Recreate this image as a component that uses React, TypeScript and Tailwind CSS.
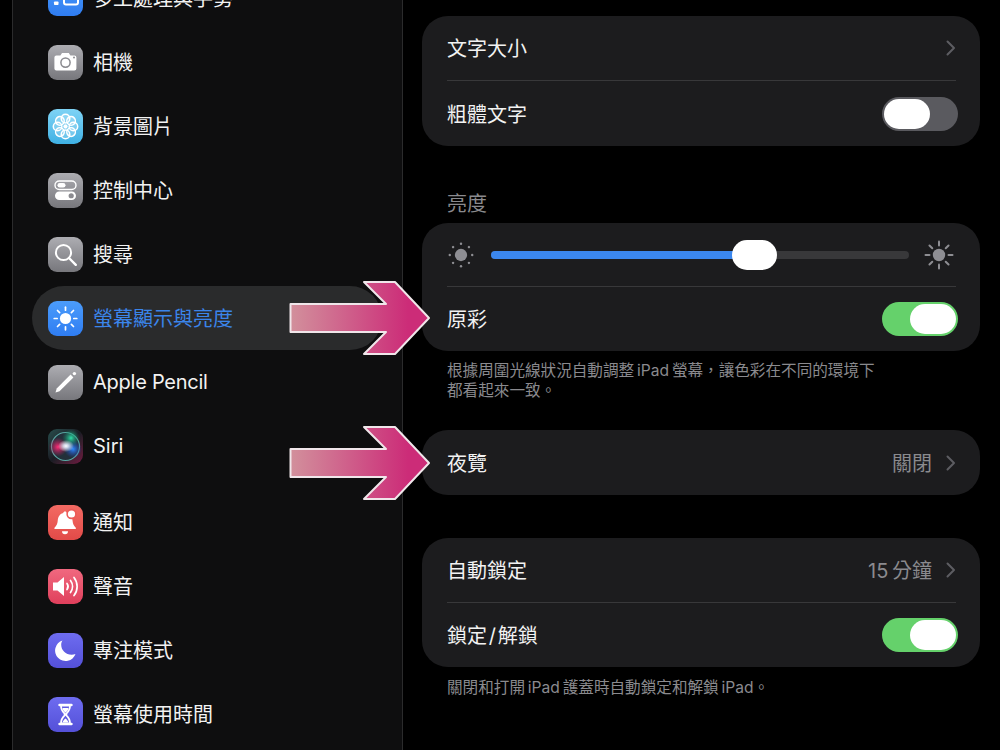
import React from "react";

const font = "font-['Inter','Noto_Sans_CJK_TC',sans-serif]";

function Tile({ cls, children }: { cls: string; children: React.ReactNode }) {
  return (
    <div className={`w-[35px] h-[35px] shrink-0 rounded-[9px] overflow-hidden ${cls}`}>
      <svg width="35" height="35" viewBox="0 0 35 35">{children}</svg>
    </div>
  );
}

const gray = "bg-linear-to-b from-[#adadb2] to-[#77777c]";

const Icons = {
  multi: (
    <Tile cls="bg-linear-to-b from-[#4a9bfb] to-[#2f7cf0]">
      <rect x="16" y="9" width="14" height="14.500" rx="2" fill="none" stroke="#fff" strokeWidth="2" />
      <rect x="6" y="14" width="4.500" height="3" rx="0.8" fill="#fff" />
      <rect x="6" y="20.500" width="4.500" height="3.500" rx="0.8" fill="#fff" />
    </Tile>
  ),
  camera: (
    <Tile cls={gray}>
      <path d="M8.500 10.500h4l1.600-2.400h6.800l1.600 2.400h4a2 2 0 0 1 2 2v11a2 2 0 0 1-2 2h-18a2 2 0 0 1-2-2v-11a2 2 0 0 1 2-2z" fill="#fff" transform="translate(-0.1 0)" />
      <circle cx="17.500" cy="17.600" r="4.600" fill="none" stroke="#8b8b90" strokeWidth="1.500" />
      <circle cx="26" cy="12.600" r="1" fill="#8b8b90" />
    </Tile>
  ),
  wallpaper: (
    <Tile cls="bg-linear-to-b from-[#7ed3f5] to-[#3eb1e4]">
      {[0, 45, 90, 135, 180, 225, 270, 315].map((a) => (
        <circle key={a} cx="17.500" cy="9.600" r="4.300" fill="#ffffff33" stroke="#fff" strokeWidth="1.500" transform={`rotate(${a} 17.500 17.500)`} />
      ))}
      <circle cx="17.500" cy="17.500" r="2.200" fill="#fff" />
    </Tile>
  ),
  control: (
    <Tile cls={gray}>
      <rect x="7" y="8" width="21" height="8.500" rx="4.250" fill="none" stroke="#fff" strokeWidth="1.400" />
      <rect x="9.500" y="10" width="8" height="4.500" rx="2.250" fill="#fff" />
      <rect x="7" y="18.500" width="21" height="8.500" rx="4.250" fill="#fff" />
      <circle cx="23.200" cy="22.750" r="2.600" fill="#8b8b90" />
    </Tile>
  ),
  search: (
    <Tile cls={gray}>
      <circle cx="15.500" cy="15.500" r="7.600" fill="none" stroke="#fff" strokeWidth="2" />
      <path d="M21 21l6.800 6.800" stroke="#fff" strokeWidth="2.400" strokeLinecap="round" />
    </Tile>
  ),
  display: (
    <Tile cls="bg-linear-to-b from-[#4b9cfb] to-[#2f7df2]">
      <circle cx="17.500" cy="17.500" r="5.600" fill="#fff" />
      {[0, 45, 90, 135, 180, 225, 270, 315].map((a) => (
        <path key={a} d="M17.500 6.200v3" stroke="#fff" strokeWidth="1.700" strokeLinecap="round" transform={`rotate(${a} 17.500 17.500)`} />
      ))}
    </Tile>
  ),
  pencil: (
    <Tile cls={gray}>
      <path d="M7.500 27.500l1.200-4L22.600 9.600l2.800 2.800L11.500 26.300z" fill="#fff" />
      <circle cx="26.400" cy="8.600" r="1.700" fill="#fff" />
    </Tile>
  ),
  siri: (
    <Tile cls="bg-linear-to-br from-[#27504e] via-[#1a1c24] to-[#701642]">
      <defs>
        <radialGradient id="sw"><stop offset="0" stopColor="#fff" /><stop offset="0.3" stopColor="#e8f2ff" stopOpacity="0.85" /><stop offset="1" stopColor="#fff" stopOpacity="0" /></radialGradient>
        <radialGradient id="sp"><stop offset="0" stopColor="#ff2d78" /><stop offset="1" stopColor="#c0185c" stopOpacity="0" /></radialGradient>
        <radialGradient id="sb"><stop offset="0" stopColor="#2f8cff" /><stop offset="1" stopColor="#2040c0" stopOpacity="0" /></radialGradient>
        <radialGradient id="sg"><stop offset="0" stopColor="#2fe0a8" /><stop offset="1" stopColor="#108060" stopOpacity="0" /></radialGradient>
      </defs>
      <circle cx="17.500" cy="17.500" r="14" fill="#23303a" stroke="#5aa8a4" strokeWidth="1.200" />
      <circle cx="10" cy="18" r="9.500" fill="url(#sp)" />
      <circle cx="25" cy="20" r="9" fill="url(#sb)" />
      <circle cx="23" cy="9" r="9" fill="url(#sg)" />
      <ellipse cx="18" cy="17" rx="8" ry="6" fill="url(#sw)" />
    </Tile>
  ),
  bell: (
    <Tile cls="bg-linear-to-b from-[#f36a63] to-[#e24a48]">
      <path d="M17 6.500c1 0 1.700.7 1.800 1.600 4 .9 5.600 4.300 5.800 8 .2 3 1.300 5 3.200 6.700.5.5.2 1.200-.5 1.200H7c-.7 0-1-.7-.5-1.200 1.900-1.700 3-3.700 3.200-6.700.2-3.700 1.800-7.100 5.500-8 .1-.9.8-1.600 1.800-1.600z" fill="#fff" />
      <path d="M14 26.200h6a3 3 0 0 1-6 0z" fill="#fff" />
      <circle cx="23.500" cy="9" r="5.200" fill="#ec5b58" />
      <circle cx="23.500" cy="9" r="3.600" fill="#fff" />
    </Tile>
  ),
  sound: (
    <Tile cls="bg-linear-to-b from-[#f0687f] to-[#e03f5c]">
      <path d="M5 13.500h4.500L16 8v19l-6.500-5.500H5z" fill="#fff" />
      <path d="M19 14.500a5 5 0 0 1 0 6" fill="none" stroke="#fff" strokeWidth="1.700" strokeLinecap="round" />
      <path d="M22.500 11.500a10 10 0 0 1 0 12" fill="none" stroke="#fff" strokeWidth="1.700" strokeLinecap="round" />
      <path d="M26 8.500a14.500 14.500 0 0 1 0 18" fill="none" stroke="#fff" strokeWidth="1.700" strokeLinecap="round" />
    </Tile>
  ),
  moon: (
    <Tile cls="bg-linear-to-b from-[#6e6cf0] to-[#5450d8]">
      <path d="M14.500 7.500a10.500 10.500 0 1 0 13 13.500c-1.300.5-2.500.7-3.800.7-6 0-10.500-4.500-10.500-10 0-1.500.4-3 1.300-4.200z" fill="#fff" />
    </Tile>
  ),
  hourglass: (
    <Tile cls="bg-linear-to-b from-[#6e6cf0] to-[#5450d8]">
      <path d="M11.500 8h12M11.500 27h12" stroke="#fff" strokeWidth="2.400" strokeLinecap="round" />
      <path d="M13 8.500h9c0 3.800-1.600 6.200-3.600 8.100v1.800c2 1.900 3.600 4.300 3.600 8.100h-9c0-3.800 1.600-6.200 3.600-8.100v-1.800c-2-1.900-3.600-4.300-3.600-8.100z" fill="#5f5ce2" stroke="#fff" strokeWidth="1.800" strokeLinejoin="round" />
      <path d="M14.500 11h6c-.4 2-1.500 3.500-3 4.700-1.500-1.200-2.600-2.700-3-4.700zM14.500 25.500c.6-1.600 1.700-2.900 3-3.900 1.300 1 2.400 2.300 3 3.900z" fill="#fff" />
    </Tile>
  ),
};

function Row({ icon, label, active, cls = "", textCls = "pt-[2px]" }: { icon: React.ReactNode; label: string; active?: boolean; cls?: string; textCls?: string }) {
  return (
    <div className={`h-16 shrink-0 flex items-center gap-[10px] pl-4 rounded-full ${active ? "bg-[#2a2b2c] text-[#3b85ea]" : "text-[#f2f2f2]"} ${cls}`}>
      {icon}
      <span className={`text-[20px] leading-none whitespace-nowrap ${textCls}`}>{label}</span>
    </div>
  );
}

function Toggle({ on }: { on?: boolean }) {
  return (
    <div className={`w-[76px] h-[34px] rounded-full flex items-center px-[2px] ${on ? "bg-[#65d16b] justify-end" : "bg-[#5a5a5f] justify-start"}`}>
      <div className="w-[46px] h-[30px] rounded-full bg-white" />
    </div>
  );
}

function Chevron() {
  return (
    <svg width="10" height="16" viewBox="0 0 10 16" className="shrink-0 mr-[2px]">
      <path d="M1.500 1.500L8 8l-6.500 6.500" fill="none" stroke="#5d5d62" strokeWidth="2" strokeLinecap="round" strokeLinejoin="round" />
    </svg>
  );
}

function Divider() {
  return <div className="h-px ml-[25px] mr-6 bg-[#38383a]" />;
}

function Line({ label, value, right, h = "h-[64px]" }: { label: string; value?: string; right: React.ReactNode; h?: string }) {
  return (
    <div className={`${h} flex items-center justify-between pl-[25px] pr-[22px] text-[20px] text-[#f2f2f2]`}>
      <span className="pt-[2px] leading-none">{label}</span>
      <div className="flex items-center gap-[14px]">
        {value && <span className="pt-[2px] text-[#8a8a8e] leading-none">{value}</span>}
        {right}
      </div>
    </div>
  );
}

function Sun({ size, big }: { size: number; big?: boolean }) {
  return (
    <svg width={size} height={size} viewBox="0 0 30 30" className="shrink-0">
      <circle cx="15" cy="15" r={big ? 6.200 : 6.600} fill="#8e8e93" />
      {[0, 45, 90, 135, 180, 225, 270, 315].map((a) =>
        big ? (
          <path key={a} d="M15 1.500v4" stroke="#8e8e93" strokeWidth="2" strokeLinecap="round" transform={`rotate(${a} 15 15)`} />
        ) : (
          <circle key={a} cx="15" cy="3" r="1.300" fill="#8e8e93" transform={`rotate(${a} 15 15)`} />
        )
      )}
    </svg>
  );
}

function Arrow({ cls, id }: { cls: string; id: string }) {
  return (
    <svg width="144" height="76" viewBox="0 0 144 76" className={`absolute left-[288px] ${cls}`}>
      <defs>
        <linearGradient id={id} x1="0" y1="0" x2="1" y2="0">
          <stop offset="0" stopColor="#d2909c" />
          <stop offset="0.85" stopColor="#cc2c78" />
          <stop offset="1" stopColor="#cc2c78" />
        </linearGradient>
      </defs>
      <path d="M2.500 24H98L76 2h31l34 36-34 36H76l22-22H2.500z" fill={`url(#${id})`} stroke="#f0e6ea" strokeWidth="2" strokeLinejoin="round" />
    </svg>
  );
}

export default function App() {
  return (
    <div className={`relative w-[1000px] h-[750px] overflow-hidden bg-black flex ${font}`}>
      <aside className="ml-3 w-[391px] h-[750px] shrink-0 overflow-hidden border-x border-[#2b2b2c] bg-[#0e0e0f] pl-[19px] pr-5">
        <div className="-mt-[34px] flex flex-col">
          <Row icon={Icons.multi} label="多工處理與手勢" />
          <Row icon={Icons.camera} label="相機" />
          <Row icon={Icons.wallpaper} label="背景圖片" />
          <Row icon={Icons.control} label="控制中心" />
          <Row icon={Icons.search} label="搜尋" />
          <Row icon={Icons.display} label="螢幕顯示與亮度" active />
          <Row icon={Icons.pencil} label="Apple Pencil" textCls="tracking-[-0.25px]" />
          <Row icon={Icons.siri} label="Siri" textCls="" />
          <Row icon={Icons.bell} label="通知" cls="mt-3" />
          <Row icon={Icons.sound} label="聲音" />
          <Row icon={Icons.moon} label="專注模式" />
          <Row icon={Icons.hourglass} label="螢幕使用時間" />
        </div>
      </aside>

      <main className="flex-1 pl-[19px] pr-5 pt-4 flex flex-col">
        <section className="rounded-[26px] bg-[#1c1c1e]">
          <Line label="文字大小" right={<Chevron />} />
          <Divider />
          <Line label="粗體文字" right={<Toggle />} h="h-[65px]" />
        </section>

        <h2 className="mt-[47px] mb-2 pl-[25px] text-[20px] leading-[22px] text-[#8a8a8e]">亮度</h2>
        <section className="rounded-[26px] bg-[#1c1c1e]">
          <div className="h-[63px] flex items-center pl-[25px] pr-[26px] gap-[15px]">
            <div className="mr-px flex">
              <Sun size={28} />
            </div>
            <div className="relative flex-1 h-2 rounded-full bg-[#38383a]">
              <div className="h-2 w-[62%] rounded-full bg-[#3b87ee]" />
              <div className="absolute left-[241px] -top-[11px] w-[45px] h-[30px] rounded-full bg-white" />
            </div>
            <Sun size={30} big />
          </div>
          <Divider />
          <Line label="原彩" right={<Toggle on />} />
        </section>
        <p className="mt-[10px] pl-[25px] text-[15.6px] leading-[20px] text-[#8a8a8e]">
          根據周圍光線狀況自動調整{"\u2009"}iPad{"\u2009"}螢幕，讓色彩在不同的環境下
          <br />
          都看起來一致。
        </p>

        <section className="mt-[29px] rounded-[26px] bg-[#1c1c1e]">
          <Line label="夜覽" value="關閉" right={<Chevron />} h="h-[65px]" />
        </section>

        <section className="mt-[43px] rounded-[26px] bg-[#1c1c1e]">
          <Line label="自動鎖定" value={"15\u2009分鐘"} right={<Chevron />} />
          <Divider />
          <Line label={"鎖定\u200A/\u200A解鎖"} right={<Toggle on />} />
        </section>
        <p className="mt-[10px] pl-[25px] text-[15.6px] leading-[21px] text-[#8a8a8e]">
          關閉和打開{"\u2009"}iPad{"\u2009"}護蓋時自動鎖定和解鎖{"\u2009"}iPad。
        </p>
      </main>

      <Arrow cls="top-[280px]" id="a1" />
      <Arrow cls="top-[425px]" id="a2" />
    </div>
  );
}
